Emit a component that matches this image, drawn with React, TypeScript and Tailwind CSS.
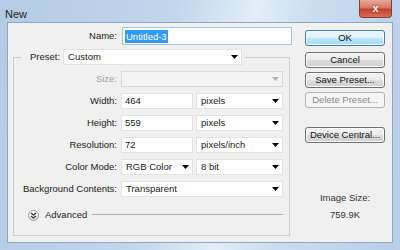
import React from "react";

const Arrow = ({ color = "#000" }: { color?: string }) => (
  <svg width="7" height="4" viewBox="0 0 7 4">
    <polygon points="0,0 7,0 3.5,4" fill={color} />
  </svg>
);

const Select = ({ text, w, disabled }: { text: string; w: string; disabled?: boolean }) => (
  <div
    className={`${w} h-[16px] flex items-center justify-between pl-[4px] pr-[3px] border ${
      disabled ? "bg-[#f4f4f4] border-[#d9d9d9]" : "bg-white border-[#e2e2e2]"
    }`}
  >
    <span>{text}</span>
    <Arrow color={disabled ? "#b5b5b5" : "#000"} />
  </div>
);

const Input = ({ text, w }: { text: string; w: string }) => (
  <div className={`${w} h-[16px] flex items-center pl-[3px] bg-white border border-[#e2e2e2]`}>{text}</div>
);

const Button = ({ label, kind, mt }: { label: string; kind?: "default" | "disabled"; mt: string }) => {
  let cls =
    "border-[#707070] text-[#111] bg-[linear-gradient(#f2f2f2_0%,#ebebeb_50%,#dddddd_50%,#cfcfcf_100%)] shadow-[inset_0_0_0_1px_#fcfcfc]";
  if (kind === "default")
    cls =
      "border-[#3c7fb1] text-[#111] bg-[linear-gradient(#eaf6fd_0%,#d9f0fc_50%,#bee6fd_50%,#a7d9f5_100%)] shadow-[inset_0_0_0_1px_#f4fbff]";
  if (kind === "disabled") cls = "border-[#adb2b5] text-[#8a8a8a] bg-[#f4f4f4]";
  return (
    <div className={`${mt} w-[80px] h-[16px] flex items-center justify-center rounded-[3px] border ${cls}`}>
      {label}
    </div>
  );
};

const Row = ({ label, disabled, children }: { label: string; disabled?: boolean; children: React.ReactNode }) => (
  <>
    <div className={`text-right ${disabled ? "text-[#a0a0a0]" : ""}`}>{label}</div>
    <div className="flex gap-[3px]">{children}</div>
  </>
);

export default function App() {
  return (
    <div
      className="w-[400px] h-[250px] overflow-hidden bg-[linear-gradient(100deg,#b3cbe4_0%,#c2d6ec_40%,#e2edf8_58%,#cadcef_72%,#b7cee7_100%)] text-[9.5px] text-[#1a1a1a]"
      style={{ fontFamily: '"Liberation Sans", Arial, sans-serif' }}
    >
      {/* title bar */}
      <div className="h-[22px] flex items-start justify-between">
        <div className="pl-[5px] pt-[6px] text-[11px] text-[#1e1e1e]">New</div>
        <div className="mr-[8px] w-[33px] h-[18px] flex items-center justify-center rounded-b-[4px] border border-t-0 border-[#8a3a30] bg-[linear-gradient(#e8a899_0%,#d47a66_45%,#c4402a_55%,#d8705a_100%)]">
          <span className="text-white font-bold text-[11px] leading-none [text-shadow:0_0_2px_#5a1a10]">x</span>
        </div>
      </div>

      {/* client area */}
      <div className="ml-[7px] w-[386px] h-[221px] border border-[#8fa6c1] bg-[#f0f0f0] flex">
        {/* left part */}
        <div className="w-[284px]">
          <div className="mt-[4px] h-[18px] flex items-center">
            <div className="w-[109px] text-right">Name:</div>
            <div className="ml-[5px] w-[170px] h-[18px] flex items-center pl-[2px] bg-white border border-[#9dc3ea]">
              <span className="bg-[#3399ff] text-white px-[1px] leading-[13px]">Untitled-3</span>
            </div>
          </div>

          <fieldset className="mt-[4px] ml-[5px] w-[277px] h-[187px] border border-[#cdcdcd] pr-[6px]">
            <legend className="ml-[7px] pl-[9px] pr-[3px] flex items-center gap-[3px]">
              <span>Preset:</span>
              <Select text="Custom" w="w-[179px]" />
            </legend>

            <div className="mt-[6px] grid grid-cols-[103px_1fr] gap-x-[4px] gap-y-[6px] items-center">
              <Row label="Size:" disabled>
                <Select text="" w="w-[162px]" disabled />
              </Row>
              <Row label="Width:">
                <Input text="464" w="w-[72px]" />
                <Select text="pixels" w="w-[87px]" />
              </Row>
              <Row label="Height:">
                <Input text="559" w="w-[72px]" />
                <Select text="pixels" w="w-[87px]" />
              </Row>
              <Row label="Resolution:">
                <Input text="72" w="w-[72px]" />
                <Select text="pixels/inch" w="w-[87px]" />
              </Row>
              <Row label="Color Mode:">
                <Select text="RGB Color" w="w-[72px]" />
                <Select text="8 bit" w="w-[87px]" />
              </Row>
              <Row label="Background Contents:">
                <Select text="Transparent" w="w-[162px]" />
              </Row>
            </div>

            <div className="mt-[10px] h-[16px] flex items-center pl-[14px]">
              <div className="w-[11px] h-[11px] rounded-full border border-[#9a9a9a] bg-[linear-gradient(#ffffff,#dcdcdc)] flex items-center justify-center">
                <svg width="7" height="7" viewBox="0 0 7 7">
                  <polyline points="1,1 3.5,3 6,1" fill="none" stroke="#333" strokeWidth="1.2" />
                  <polyline points="1,4 3.5,6 6,4" fill="none" stroke="#333" strokeWidth="1.2" />
                </svg>
              </div>
              <span className="ml-[6px]">Advanced</span>
              <div className="ml-[5px] flex-1 h-[2px] border-t border-[#b0b0b0] border-b-white" />
            </div>
          </fieldset>
        </div>

        {/* right part */}
        <div className="ml-[13px] w-[80px] flex flex-col items-center">
          <Button label="OK" kind="default" mt="mt-[7px]" />
          <Button label="Cancel" mt="mt-[6px]" />
          <Button label="Save Preset..." mt="mt-[4px]" />
          <Button label="Delete Preset..." kind="disabled" mt="mt-[4px]" />
          <Button label="Device Central..." mt="mt-[19px]" />
          <div className="mt-[48px] leading-[13px] text-[#333]">Image Size:</div>
          <div className="mt-[4px] leading-[13px] text-[#333]">759.9K</div>
        </div>
      </div>
    </div>
  );
}
